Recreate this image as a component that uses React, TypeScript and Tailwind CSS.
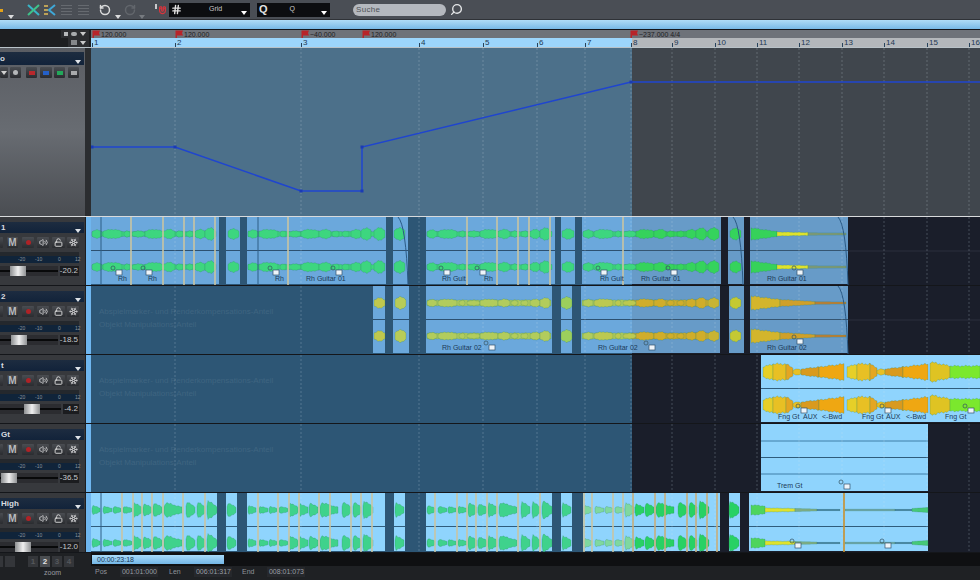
import { Hash, LockOpen, Magnet, RotateCcw, RotateCw, Search, Snowflake, Volume2 } from 'lucide-react';

const LANE = 91;
const SPLIT = 632;
const bars = [92, 175, 301, 419, 483, 537, 585, 631, 672, 715, 757, 799, 842, 884, 927, 969];

const tempos = [
  { x: 92, label: '120.000' },
  { x: 175, label: '120.000' },
  { x: 301, label: '~40.000' },
  { x: 362, label: '120.000' },
  { x: 630, label: '~237.000 4/4' },
];

type Lobe = { a: number; b: number; amp: number; end: number; color: string; kind: 'bell' | 'decay' | 'line' };
type Tag = { x: number; text: string };
type Box = { x: number; y: number };

// the riffs repeat, so lobes are listed once and moved along the timeline
const sustain: number[][] = [
  [1, 11, 4], [12, 31, 4.5], [33, 39, 3], [41, 54, 3], [54, 72, 4.5], [72, 84, 4.5], [85, 92, 3], [95, 102, 3], [104, 114, 4.5], [114, 124, 6],
];
const plucks: number[][] = [
  [1, 9, 4], [12, 21, 3], [22, 30, 3], [32, 41, 3], [42, 51, 7], [52, 61, 6], [62, 71, 7], [73, 91, 7], [95, 104, 8], [106, 114, 8], [116, 126, 9],
];

const riff = (list: number[][], at: number, kind: Lobe['kind'], color: (x: number) => string, scale = 1): Lobe[] =>
  list.map(([a, b, amp]) => ({ a: a + at, b: b + at, amp: amp * scale, end: 0, kind, color: color(a + at) }));

const single = (a: number, b: number, amp: number, end: number, kind: Lobe['kind'], color: string): Lobe => ({ a, b, amp, end, kind, color });

const base = (a: number, b: number, amp: number, color: (x: number) => string): Lobe[] => {
  if (a < SPLIT && b > SPLIT) return [single(a, SPLIT, amp, amp, 'line', color(a)), single(SPLIT, b, amp, amp, 'line', color(b))];
  return [single(a, b, amp, amp, 'line', color(a))];
};

const green1 = (x: number) => (x < SPLIT ? '#3dd67f' : '#35d35c');
const olive = (x: number) => (x < 590 ? '#b2cc5c' : x < SPLIT ? '#bcc950' : '#d0ad2a');
const mint = (x: number) => (x >= SPLIT ? '#28d164' : x >= 583 ? '#7fd8a0' : '#3fd28c');

const fingerRiff = (at: number): Lobe[] => [
  single(at + 2, at + 12, 5, 8, 'line', '#e6cf28'),
  single(at + 12, at + 25, 8, 8, 'line', '#e8c024'),
  single(at + 25, at + 32, 8, 4, 'line', '#e4a622'),
  single(at + 32, at + 40, 3, 3, 'bell', '#e8c024'),
  single(at + 40, at + 58, 3, 5, 'line', '#d99a1e'),
  single(at + 58, at + 83, 5, 8, 'line', '#efa712'),
];

const tracks = [
  {
    name: '1', volume: '-20.2', fader: 10, height: 69, bright: false, ghost: false,
    clips: [[91, 219], [226, 240], [247, 386], [393, 408], [426, 555], [561, 575], [582, 721], [728, 744], [750, 848]],
    lobes: [
      ...base(92, 216, 2.5, green1),
      ...riff(sustain, 91, 'bell', green1),
      single(228, 239, 5, 0, 'bell', '#3dd67f'),
      ...base(248, 384, 2.5, green1),
      ...riff(sustain, 247, 'bell', green1),
      single(374, 385, 6, 0, 'bell', '#3dd67f'),
      single(394, 405, 6, 0, 'bell', '#3dd67f'),
      ...base(427, 552, 2.5, green1),
      ...riff(sustain, 426, 'bell', green1),
      single(562, 574, 5, 0, 'bell', '#3dd67f'),
      ...base(583, 716, 2.5, green1),
      ...riff(sustain, 582, 'bell', green1),
      single(708, 719, 6, 0, 'bell', green1(700)),
      single(730, 741, 5.5, 0, 'bell', green1(700)),
      single(751, 777, 6, 2.5, 'line', '#36d25a'),
      single(777, 808, 2, 1.5, 'line', '#dfe22c'),
      single(808, 846, 1.2, 1, 'line', '#7f9a78'),
    ],
    marks: [131, 163, 184, 194, 215, 288, 467, 497, 518, 529, 550, 623],
    darks: [101, 258],
    tags: [
      { x: 118, text: 'Rh' }, { x: 148, text: 'Rh' }, { x: 275, text: 'Rh' }, { x: 306, text: 'Rh Guitar 01' },
      { x: 442, text: 'Rh Guit' }, { x: 484, text: 'Rh' }, { x: 600, text: 'Rh Guit' }, { x: 641, text: 'Rh Guitar 01' }, { x: 767, text: 'Rh Guitar 01' },
    ] as Tag[],
    boxes: [{ x: 116, y: 53 }, { x: 146, y: 53 }, { x: 273, y: 53 }, { x: 336, y: 53 }, { x: 444, y: 53 }, { x: 480, y: 53 }, { x: 601, y: 53 }, { x: 671, y: 53 }, { x: 797, y: 53 }] as Box[],
    fades: [848, 743, 408],
  },
  {
    name: '2', volume: '-18.5', fader: 11, height: 69, bright: false, ghost: true,
    clips: [[373, 385], [393, 409], [426, 552], [561, 572], [581, 720], [729, 744], [750, 848]],
    lobes: [
      single(374, 385, 5, 0, 'bell', '#c0c84e'),
      single(395, 406, 6, 0, 'bell', '#b8cc58'),
      ...base(427, 551, 3, olive),
      ...riff(sustain, 426, 'bell', olive, 0.85),
      single(561, 572, 6, 0, 'bell', '#9ccf5c'),
      ...base(582, 718, 3, olive),
      ...riff(sustain, 582, 'bell', olive, 0.9),
      single(708, 719, 5, 0, 'bell', '#c8b433'),
      single(730, 741, 5.5, 0, 'bell', '#c4c933'),
      single(751, 780, 7, 3.5, 'line', '#d3b52c'),
      single(780, 815, 3.5, 1.5, 'line', '#cfa02a'),
      single(815, 846, 1.3, 1, 'line', '#bd7f34'),
    ],
    marks: [], darks: [],
    tags: [{ x: 442, text: 'Rh Guitar 02' }, { x: 598, text: 'Rh Guitar 02' }, { x: 767, text: 'Rh Guitar 02' }] as Tag[],
    boxes: [{ x: 489, y: 59 }, { x: 649, y: 59 }, { x: 797, y: 53 }] as Box[],
    fades: [848],
  },
  {
    name: 't', volume: '-4.2', fader: 24, height: 69, bright: true, ghost: true,
    clips: [[761, 846], [846, 927], [927, 980]],
    lobes: [
      ...fingerRiff(761),
      ...fingerRiff(845),
      single(930, 950, 10, 6, 'line', '#dfc323'),
      single(950, 980, 6, 6, 'line', '#7be82d'),
    ],
    marks: [], darks: [],
    tags: [
      { x: 778, text: 'Fng Gt' }, { x: 803, text: 'AUX' }, { x: 822, text: '<-Bwd' },
      { x: 862, text: 'Fng Gt' }, { x: 886, text: 'AUX' }, { x: 906, text: '<-Bwd' }, { x: 945, text: 'Fng Gt' },
    ] as Tag[],
    boxes: [{ x: 801, y: 53 }, { x: 885, y: 53 }, { x: 968, y: 53 }] as Box[],
    fades: [],
  },
  {
    name: 'Gt', volume: '-36.5', fader: 1, height: 69, bright: true, ghost: true,
    clips: [[761, 928]],
    lobes: [],
    marks: [], darks: [],
    tags: [{ x: 777, text: 'Trem Gt' }] as Tag[],
    boxes: [{ x: 844, y: 60 }] as Box[],
    fades: [],
  },
  {
    name: 'High', volume: '-12.0', fader: 15, height: 60, bright: true, ghost: false,
    clips: [[91, 217], [226, 237], [247, 385], [394, 405], [426, 552], [561, 572], [583, 720], [729, 740], [749, 928]],
    lobes: [
      ...riff(plucks, 91, 'decay', mint),
      single(227, 236, 7, 0, 'decay', '#3fd28c'),
      ...riff(plucks, 247, 'decay', mint),
      single(395, 404, 7, 0, 'decay', '#3fd28c'),
      ...riff(plucks, 426, 'decay', mint),
      single(562, 571, 7, 0, 'decay', '#3fd28c'),
      ...riff(plucks, 583, 'decay', mint),
      single(729, 739, 9, 0, 'decay', '#28d164'),
      single(751, 765, 5, 4, 'line', '#4ed45c'),
      single(765, 795, 2, 1.5, 'line', '#dfe22c'),
      single(795, 817, 1.5, 1, 'line', '#7fae86'),
      single(817, 840, 0.6, 0.6, 'line', '#2b5a85'),
      single(845, 895, 0.8, 0.8, 'line', '#6a9c98'),
      single(895, 912, 0.6, 0.6, 'line', '#2b5a85'),
      single(912, 928, 1.5, 2.5, 'line', '#46c878'),
    ],
    marks: [122, 133, 142, 152, 163, 183, 205, 258, 278, 289, 299, 319, 330, 351, 361, 372, 435, 457, 467, 476, 487, 497, 518, 540, 584, 592, 613, 623, 633, 655, 665, 687, 696, 707, 717, 844],
    darks: [101],
    tags: [] as Tag[],
    boxes: [{ x: 795, y: 50 }, { x: 885, y: 50 }] as Box[],
    fades: [],
  },
];

const lobePath = (lobe: Lobe, cy: number) => {
  const top: string[] = [];
  const bottom: string[] = [];
  const width = lobe.b - lobe.a;
  for (let x = lobe.a; x <= lobe.b; x += 1) {
    const t = (x - lobe.a) / width;
    let amp = lobe.amp;
    if (lobe.kind === 'bell') amp = lobe.amp * (0.6 + 0.4 * Math.sin(Math.PI * t));
    if (lobe.kind === 'decay') amp = lobe.amp * Math.min(1, t * 8 + 0.35) * (1 - 0.72 * t) + 0.8;
    if (lobe.kind === 'line') amp = lobe.amp + (lobe.end - lobe.amp) * t;
    const wobble = lobe.kind === 'line' && lobe.amp < 2 ? 1 : 1 + 0.09 * Math.sin(x * 1.7) + 0.06 * Math.sin(x * 0.6);
    top.push(`${x - LANE} ${(cy - amp * wobble).toFixed(1)}`);
    bottom.unshift(`${x - LANE} ${(cy + amp * wobble).toFixed(1)}`);
  }
  return `M${top.join('L')}L${bottom.join('L')}Z`;
};

const Flag = () => (
  <svg width="9" height="9" viewBox="0 0 9 9" className="shrink-0">
    <path d="M0.5 0.5h7.500l-1 2.500 1 2.500h-6v3h-1.500z" fill="#b8242a" />
  </svg>
);

const Tri = ({ className }: { className: string }) => (
  <span className={`inline-block w-0 h-0 border-l-[3px] border-r-[3px] border-t-[4px] border-l-transparent border-r-transparent ${className}`} />
);

const GreyLines = ({ className }: { className: string }) => (
  <div className={`flex flex-col gap-[2px] w-[11px] ${className}`}>
    <span className="h-px bg-[#666a70]" />
    <span className="h-px bg-[#666a70]" />
    <span className="h-px bg-[#666a70]" />
    <span className="h-px bg-[#666a70]" />
  </div>
);

const Toolbar = () => (
  <div className="h-[19px] flex items-center bg-[#4a4e55] border-b border-[#2f3237] box-content">
    <span className="w-[3px] h-[3px] bg-[#e3a21a] mt-[1px]" />
    <span className="ml-[5px] mt-[8px]"><Tri className="border-t-white/80 block" /></span>
    <svg width="13" height="12" viewBox="0 0 13 12" className="ml-[13px]">
      <path d="M1 1l11 10" stroke="#38b6c9" strokeWidth="2" />
      <path d="M12 1l-11 10" stroke="#3fc38a" strokeWidth="2" />
    </svg>
    <svg width="13" height="12" viewBox="0 0 13 12" className="ml-[3px]">
      <path d="M1 2h4M1 6h4M1 10h4" stroke="#e3bf5a" strokeWidth="1.500" />
      <path d="M12 1l-6 5 6 5" stroke="#3fa8d8" strokeWidth="2" fill="none" />
    </svg>
    <GreyLines className="ml-[5px]" />
    <GreyLines className="ml-[6px]" />
    <RotateCcw size={12} strokeWidth={3} className="ml-[10px] text-[#d9dadb]" />
    <span className="ml-[4px] mt-[9px]"><Tri className="border-t-white/80 block" /></span>
    <RotateCw size={12} strokeWidth={3} className="ml-[3px] text-[#62666c]" />
    <span className="ml-[3px] mt-[9px]"><Tri className="border-t-[#777b80] block" /></span>
    <span className="ml-[10px] w-[2px] h-[5px] border-x border-white/70 -mt-[6px]" />
    <Magnet size={9} strokeWidth={3} className="ml-[1px] text-[#d8343c] rotate-[135deg]" />
    <div className="ml-[2px] w-[81px] h-[14px] bg-[#0c0d10] flex items-center pl-[2px]">
      <Hash size={11} strokeWidth={3} className="text-[#e2e2e2]" />
      <span className="ml-[27px] text-[7px] text-[#c9c9c9]">Grid</span>
      <span className="ml-auto mr-[3px]"><Tri className="border-t-white block" /></span>
    </div>
    <div className="ml-[7px] w-[73px] h-[14px] bg-[#0c0d10] flex items-center pl-[2px]">
      <span className="text-[11px] leading-none font-bold text-[#e2e2e2]">Q</span>
      <span className="ml-[22px] text-[7px] text-[#c9c9c9]">Q</span>
      <span className="ml-auto mr-[3px]"><Tri className="border-t-white block" /></span>
    </div>
    <div className="ml-[23px] w-[93px] h-[12px] rounded-full bg-[#b4b8be] flex items-center pl-[3px]">
      <span className="text-[8px] tracking-[0.3px] text-[#4e5257]">Suche</span>
    </div>
    <Search size={13} strokeWidth={2.500} className="ml-[4px] text-[#e4e6e8] -scale-x-100" />
  </div>
);

const TempoRow = () => (
  <div className="h-[8px] flex">
    <div className="w-[91px] bg-[#1d1e20] flex justify-end items-center pr-[2px] gap-[2px]">
      <div className="flex items-center gap-[3px] bg-[#2c2d30] h-full px-[3px]">
        <span className="w-[4px] h-[4px] bg-[#b6b8ba]" />
        <span className="w-[6px] h-[4px] rounded-full bg-[#a9abad]" />
        <Tri className="border-t-[#c9c9c9]" />
      </div>
    </div>
    <div className="relative flex-1 bg-[#6e7279]">
      {tempos.map((t) => (
        <div key={t.x} className="absolute top-0 h-[8px] flex items-center" style={{ left: t.x - LANE }}>
          <Flag />
          <span className="text-[7px] leading-none text-[#1f2124] whitespace-nowrap">{t.label}</span>
        </div>
      ))}
    </div>
  </div>
);

const RulerRow = () => (
  <div className="h-[9px] flex">
    <div className="w-[91px] bg-[#1d1e20] flex justify-end items-center pr-[2px]">
      <div className="flex items-center gap-[3px] bg-[#2c2d30] h-full px-[3px]">
        <span className="w-[6px] h-[5px] bg-[#85878a]" />
        <Tri className="border-t-[#c9c9c9]" />
      </div>
    </div>
    <div className="relative flex-1 flex">
      <div className="w-[541px] bg-[#9cd5fb]" />
      <div className="flex-1 bg-[#b4b7bb]" />
      {bars.map((x, i) => (
        <div key={x} className="absolute top-0 h-[9px] flex items-end" style={{ left: x - LANE }}>
          <span className="w-px h-[4px] bg-[#27435c]" />
          <span className="ml-[1px] text-[8px] leading-[9px] text-[#1d3853]">{i + 1}</span>
        </div>
      ))}
    </div>
  </div>
);

const GridLines = ({ height }: { height: number }) => (
  <>
    {bars.slice(1).map((x) => (
      <line key={x} x1={x - LANE} x2={x - LANE} y1={0} y2={height} stroke="#d6e4ee" strokeOpacity="0.24" strokeDasharray="2 2" />
    ))}
  </>
);

const TempoLane = () => {
  const pts = [[1, 147], [84, 147], [210, 191], [271, 191], [271, 147], [540, 82], [889, 82]];
  return (
    <div className="relative flex-1 flex">
      <div className="w-[541px] bg-[#4c708a]" />
      <div className="flex-1 bg-[#40464d]" />
      <svg className="absolute inset-0" width="889" height="168">
        <GridLines height={168} />
        <polyline points={pts.map(([x, y]) => `${x},${y - 48}`).join(' ')} fill="none" stroke="#1f45cf" strokeWidth="1.500" />
        {pts.slice(0, 6).map(([x, y]) => (
          <rect key={`${x}-${y}`} x={x - 1.5} y={y - 49.5} width="3" height="3" fill="#1a3bb4" />
        ))}
      </svg>
    </div>
  );
};

const HeaderButton = ({ children, className }: { children?: React.ReactNode; className: string }) => (
  <div className={`h-[11px] rounded-[1px] bg-gradient-to-b from-[#4a4d52] to-[#2a2c30] flex items-center justify-center ${className}`}>
    {children}
  </div>
);

const TrackHeader = ({ name, volume, fader }: { name: string; volume: string; fader: number }) => (
  <div className="w-[85px] shrink-0 bg-[#37393d] pt-[5px] overflow-hidden">
    <div className="h-[11px] bg-gradient-to-b from-[#1d2c40] to-[#12233a] flex items-center pl-[1px] pr-[3px] mr-[1px]">
      <span className="text-[8px] font-bold text-[#d9dce0] leading-none">{name}</span>
      <span className="ml-auto"><Tri className="border-t-[#dfe3e8] block" /></span>
    </div>
    <div className="flex mt-[4px]">
      <HeaderButton className="w-[3px]" />
      <HeaderButton className="w-[11px] ml-[4px]">
        <span className="text-[10px] font-bold text-[#b9bbbd] leading-none">M</span>
      </HeaderButton>
      <HeaderButton className="w-[12px] ml-[4px]">
        <span className="w-[5px] h-[5px] rounded-full bg-[#b02226]" />
      </HeaderButton>
      <HeaderButton className="w-[12px] ml-[3px]">
        <Volume2 size={9} strokeWidth={2.500} className="text-[#c7c8ca]" />
      </HeaderButton>
      <HeaderButton className="w-[13px] ml-[3px]">
        <LockOpen size={9} strokeWidth={2.500} className="text-[#dadada]" />
      </HeaderButton>
      <HeaderButton className="w-[12px] ml-[2px]">
        <Snowflake size={9} strokeWidth={2.500} className="text-[#c7c8ca]" />
      </HeaderButton>
    </div>
    <div className="w-[79px] h-[11px] mt-[4px] bg-[#1a2026] flex flex-col">
      <div className="h-[4px] bg-[#24282d]" />
      <div className="relative flex-1 bg-[#10243a]">
        <span className="absolute left-[18px] top-0 text-[5px] leading-[7px] text-[#8a929b]">-20</span>
        <span className="absolute left-[35px] top-0 text-[5px] leading-[7px] text-[#8a929b]">-10</span>
        <span className="absolute left-[58px] top-0 text-[5px] leading-[7px] text-[#8a929b]">0</span>
        <span className="absolute left-[75px] top-0 text-[5px] leading-[7px] text-[#8a929b]">12</span>
      </div>
    </div>
    <div className="flex mt-[3px] w-[79px] h-[10px]">
      <div className="relative w-[61px] bg-[#2b2c30] flex items-center">
        <div className="w-full h-[2px] bg-[#08090a]" />
        <div
          className="absolute top-0 h-[10px] w-[16px] bg-gradient-to-r from-[#8d8f91] via-[#f0f0f0] to-[#909294]"
          style={{ left: fader }}
        />
      </div>
      <div className="ml-[2px] flex-1 bg-[#1b1c1f] flex items-center justify-end pr-[1px]">
        <span className="text-[8px] leading-none text-[#c7c9cc]">{volume}</span>
      </div>
    </div>
  </div>
);

const Clip = ({ from, to, bright }: { from: number; to: number; bright: boolean }) => (
  <div
    className={`absolute top-0 bottom-[1px] ${bright ? 'bg-[#8fd4fd]' : 'bg-[#6ba8dc]'}`}
    style={{ left: from - LANE, width: to - from }}
  >
    <div className={`h-[34px] border-b ${bright ? 'border-[#2f5c7c]' : 'border-[#2c5070]'}`} />
    {!bright && to > SPLIT && (
      <div className="absolute inset-y-0 right-0 bg-[#5b6b7a]/20" style={{ width: Math.min(to - SPLIT, to - from) }} />
    )}
  </div>
);

type TrackData = (typeof tracks)[number];

const TrackRow = ({ track }: { track: TrackData }) => {
  const h = track.height;
  const isTrem = track.name === 'Gt';
  return (
    <div className="flex border-b border-[#14161a] box-border" style={{ height: h }}>
      <TrackHeader name={track.name} volume={track.volume} fader={track.fader} />
      <div className="w-[1px] bg-[#1d1e20]" />
      <div className="w-[5px] bg-[#6fb6ef]" />
      <div className="relative flex-1 flex overflow-hidden">
        <div className="w-[541px] bg-[#2d5675]">
          {track.ghost && (
            <div className="pl-[8px] pt-[19px] text-[8px] leading-[13px] text-[#3f6581]">
              <div>Abspielmarker- und Renderkompensations-Anteil</div>
              <div>Objekt Manipulations-Anteil</div>
            </div>
          )}
        </div>
        <div className="flex-1 bg-[#1a1e2a]" />
        {track.clips.map(([a, b]) => (
          <Clip key={a} from={a} to={b} bright={track.bright} />
        ))}
        <svg className="absolute inset-0" width="889" height={h}>
          {!track.bright && <line x1={757} x2={889} y1={34} y2={34} stroke="#2a2f3c" />}
          {isTrem && (
            <>
              <line x1={670} x2={837} y1={17} y2={17} stroke="#3f7ea8" />
              <line x1={670} x2={837} y1={50} y2={50} stroke="#3f7ea8" />
            </>
          )}
          <GridLines height={h} />
          {track.lobes.map((lobe, i) => (
            <g key={i}>
              <path d={lobePath(lobe, 17)} fill={lobe.color} stroke="#2b7f63" strokeWidth="0.4" strokeOpacity="0.6" />
              <path d={lobePath(lobe, 50)} fill={lobe.color} stroke="#2b7f63" strokeWidth="0.4" strokeOpacity="0.6" />
            </g>
          ))}
          {track.marks.map((x) => (
            <line
              key={x}
              x1={x - LANE}
              x2={x - LANE}
              y1={0}
              y2={h - 1}
              stroke={x === 844 ? '#c9902c' : x >= SPLIT ? '#c7ae7c' : '#c9c5a2'}
              strokeWidth="1.600"
            />
          ))}
          {track.darks.map((x) => (
            <line key={x} x1={x - LANE} x2={x - LANE} y1={0} y2={h - 1} stroke="#2e5f86" />
          ))}
          {track.fades.map((x) => (
            <path key={x} d={`M${x - 10 - LANE} 0Q${x - 2 - LANE} 8 ${x - LANE} ${h - 1}`} fill="none" stroke="#2b5a85" />
          ))}
          {track.boxes.map((b) => (
            <g key={b.x}>
              <circle cx={b.x - 3 - LANE} cy={b.y - 2} r="2" fill="none" stroke="#33525f" strokeWidth="0.7" />
              <rect x={b.x - LANE} y={b.y} width="6" height="5" fill="#eef5fa" stroke="#33506a" strokeWidth="0.7" />
            </g>
          ))}
        </svg>
        {track.tags.map((t) => (
          <span
            key={t.x}
            className="absolute top-[58px] text-[7px] leading-[8px] text-[#1b3a58] whitespace-nowrap"
            style={{ left: t.x - LANE }}
          >
            {t.text}
          </span>
        ))}
      </div>
    </div>
  );
};

const StatusField = ({ label, value }: { label: string; value: string }) => (
  <div className="flex items-center h-[10px]">
    <span className="w-[25px] text-[7px] text-[#8f949a]">{label}</span>
    <span className="w-[38px] h-[10px] bg-[#26282c] text-[7px] leading-[10px] text-right pr-[1px] text-[#9a9ea4]">{value}</span>
  </div>
);

export default function App() {
  return (
    <div className="w-[980px] h-[580px] overflow-hidden flex flex-col bg-[#1a1c1f] [font-family:'Liberation_Sans',sans-serif]">
      <Toolbar />
      <div className="h-[9px] bg-gradient-to-b from-[#b0dcf6] to-[#78b9e6]" />
      <div className="h-px bg-[#14161a]" />
      <TempoRow />
      <RulerRow />
      <div className="h-[169px] flex border-t border-[#b9c2c8] box-border">
        <div className="w-[85px] shrink-0 pt-[4px] bg-gradient-to-b from-[#5a5d63] via-[#686c72] to-[#4a4d52] overflow-hidden">
          <div className="h-[13px] bg-gradient-to-b from-[#1d2c40] to-[#12233a] flex items-center pr-[3px] mr-[1px]">
            <span className="text-[8px] font-bold text-[#d9dce0] leading-none">o</span>
            <span className="ml-auto"><Tri className="border-t-[#dfe3e8] block" /></span>
          </div>
          <div className="flex mt-[2px] w-[79px]">
            <HeaderButton className="w-[8px]"><Tri className="border-t-[#d0d0d0]" /></HeaderButton>
            <HeaderButton className="w-[11px] ml-[2px]"><span className="w-[5px] h-[5px] rounded-full bg-[#b5b7b9]" /></HeaderButton>
            <HeaderButton className="w-[11px] ml-[5px]"><span className="w-[6px] h-[4px] bg-[#b8282c]" /></HeaderButton>
            <HeaderButton className="w-[12px] ml-[3px]"><span className="w-[6px] h-[4px] bg-[#2460c8]" /></HeaderButton>
            <HeaderButton className="w-[11px] ml-[2px]"><span className="w-[6px] h-[4px] bg-[#22a85a]" /></HeaderButton>
            <HeaderButton className="w-[11px] ml-[3px]"><span className="w-[6px] h-[4px] bg-[#a8aaac]" /></HeaderButton>
          </div>
        </div>
        <div className="w-[6px] bg-[#2b2d30]" />
        <TempoLane />
      </div>
      <div className="h-px bg-[#d8dadc]" />
      {tracks.map((track) => (
        <TrackRow key={track.name} track={track} />
      ))}
      <div className="flex-1 flex">
        <div className="w-[91px] flex flex-col bg-[#1f2124] pt-[3px]">
          <div className="flex gap-[2px]">
            <span className="w-[3px] h-[11px] bg-[#34363a]" />
            <span className="w-[10px] h-[11px] bg-[#34363a]" />
            <span className="w-[10px] h-[11px] ml-[11px] bg-[#34363a] text-[8px] leading-[11px] text-center font-bold text-[#55585c]">1</span>
            <span className="w-[10px] h-[11px] bg-[#4a4d51] text-[8px] leading-[11px] text-center font-bold text-[#e4e4e4]">2</span>
            <span className="w-[10px] h-[11px] bg-[#34363a] text-[8px] leading-[11px] text-center font-bold text-[#55585c]">3</span>
            <span className="w-[10px] h-[11px] bg-[#34363a] text-[8px] leading-[11px] text-center font-bold text-[#55585c]">4</span>
          </div>
          <span className="pl-[44px] text-[7px] leading-[10px] text-[#9a9da1] mt-[1px]">zoom</span>
        </div>
        <div className="flex-1 flex flex-col">
          <div className="h-[13px] pt-[2px] bg-[#0f1012]">
            <div className="ml-[1px] w-[132px] h-[9px] bg-gradient-to-b from-[#a9dcfb] to-[#73b6e6] text-[7px] leading-[9px] pl-[5px] text-[#1d3853]">
              00:00:23:18
            </div>
          </div>
          <div className="flex pl-[4px] pt-[1px] gap-[10px] bg-[#1f2124] flex-1">
            <StatusField label="Pos" value="001:01:000" />
            <div className="ml-[1px]"><StatusField label="Len" value="006:01:317" /></div>
            <StatusField label="End" value="008:01:073" />
          </div>
        </div>
      </div>
    </div>
  );
}
